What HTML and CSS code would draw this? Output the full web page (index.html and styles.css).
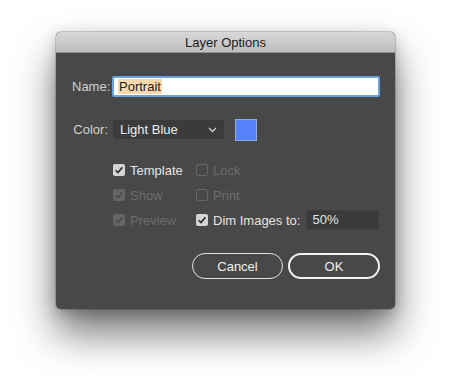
FILE: index.html
```html
<!DOCTYPE html>
<html>
<head>
<meta charset="utf-8">
<link rel="stylesheet" href="styles.css">
</head>
<body>
<div class="dialog">
  <div class="titlebar">Layer Options</div>
  <div class="content">
    <div class="row name-row">
      <span class="label">Name:</span>
      <div class="text-input focused"><span class="sel">Portrait</span></div>
    </div>
    <div class="row color-row">
      <span class="label">Color:</span>
      <div class="select"><span>Light Blue</span>
        <svg class="chev" width="9" height="6" viewBox="0 0 9 6"><path d="M1 1 L4.5 4.5 L8 1" fill="none" stroke="#cfcfcf" stroke-width="1.3"/></svg>
      </div>
      <div class="swatch"></div>
    </div>
    <div class="checks">
      <div class="check-row">
        <label class="cb col1"><span class="box on"><svg viewBox="0 0 12 12"><path d="M2.6 6.2 L5 8.6 L9.4 3.2" fill="none" stroke="#2a2a2a" stroke-width="1.6"/></svg></span>Template</label>
        <label class="cb dis"><span class="box off"></span>Lock</label>
      </div>
      <div class="check-row">
        <label class="cb col1 dis"><span class="box dison"><svg viewBox="0 0 12 12"><path d="M2.6 6.2 L5 8.6 L9.4 3.2" fill="none" stroke="#4a4a4a" stroke-width="1.6"/></svg></span>Show</label>
        <label class="cb dis"><span class="box off"></span>Print</label>
      </div>
      <div class="check-row">
        <label class="cb col1 dis"><span class="box dison"><svg viewBox="0 0 12 12"><path d="M2.6 6.2 L5 8.6 L9.4 3.2" fill="none" stroke="#4a4a4a" stroke-width="1.6"/></svg></span>Preview</label>
        <label class="cb"><span class="box on"><svg viewBox="0 0 12 12"><path d="M2.6 6.2 L5 8.6 L9.4 3.2" fill="none" stroke="#2a2a2a" stroke-width="1.6"/></svg></span>Dim Images to:</label>
        <div class="dim-input">50%</div>
      </div>
    </div>
    <div class="buttons">
      <button class="btn">Cancel</button>
      <button class="btn default">OK</button>
    </div>
  </div>
</div>
</body>
</html>
```
FILE: styles.css
```css
html, body {
  margin: 0;
  padding: 0;
  background: #ffffff;
  width: 451px;
  height: 389px;
  overflow: hidden;
  font-family: "Liberation Sans", Arial, sans-serif;
  font-size: 13px;
}
.dialog {
  margin: 32px 0 0 56px;
  width: 339px;
  height: 277px;
  background: #484848;
  border-radius: 5px;
  box-shadow: 0 24px 40px rgba(0,0,0,0.55), 0 4px 14px rgba(0,0,0,0.22), 0 0 0 1px rgba(0,0,0,0.15);
  overflow: hidden;
  display: flex;
  flex-direction: column;
}
.titlebar {
  height: 21px;
  line-height: 22px;
  text-align: center;
  color: #1c1c1c;
  background: linear-gradient(#d8d8d8, #bdbdbd);
  border-bottom: 1px solid #8e8e8e;
  box-sizing: border-box;
  flex: none;
}
.content {
  padding: 23px 15px 0 16px;
  display: flex;
  flex-direction: column;
}
.row {
  display: flex;
  align-items: center;
}
.label {
  width: 36px;
  text-align: right;
  color: #d2d2d2;
  margin-right: 4px;
}
.text-input {
  width: 268px;
  height: 21px;
  box-sizing: border-box;
  background: #ffffff;
  border: 2px solid #6aa2e0;
  border-radius: 2px;
  display: flex;
  align-items: center;
  padding-left: 4px;
  color: #222;
}
.sel {
  background: #f9dab0;
  padding: 0 1px;
  line-height: 15px;
}
.color-row {
  margin-top: 21px;
  height: 23px;
}
.color-row .label {
  margin-right: 5px;
}
.select {
  width: 111px;
  height: 19px;
  box-sizing: border-box;
  background: #3b3b3b;
  border-radius: 2px;
  color: #ececec;
  display: flex;
  align-items: center;
  justify-content: space-between;
  padding: 0 7px 0 7px;
}
.chev { display: block; }
.swatch {
  margin-left: 11px;
  width: 22px;
  height: 22px;
  box-sizing: border-box;
  background: #5581fb;
  border: 1px solid #93ace0;
}
.checks {
  margin-top: 19px;
  display: flex;
  flex-direction: column;
  gap: 5px;
  padding-left: 41px;
}
.check-row {
  display: flex;
  align-items: center;
  height: 20px;
}
.cb {
  display: flex;
  align-items: center;
  color: #e4e4e4;
}
.cb.col1 { width: 83px; }
.cb.dis { color: #6c6c6c; }
.box {
  width: 12px;
  height: 12px;
  box-sizing: border-box;
  border-radius: 2px;
  margin-right: 5px;
  display: block;
}
.box svg { width: 12px; height: 12px; display: block; }
.box.on { background: #d4d4d4; }
.box.dison { background: #646464; }
.box.off { border: 1px solid #676767; }
.dim-input {
  margin-left: 6px;
  width: 73px;
  height: 20px;
  box-sizing: border-box;
  background: #3a3a3a;
  border: 1px solid #3f3f3f;
  color: #e4e4e4;
  padding-left: 5px;
  line-height: 18px;
}
.buttons {
  margin-top: 23px;
  display: flex;
  justify-content: flex-end;
  gap: 5px;
}
.btn {
  font-family: inherit;
  font-size: 13px;
  color: #f0f0f0;
  background: transparent;
  width: 91px;
  height: 26px;
  border: 1.5px solid #e2e2e2;
  border-radius: 13px;
  padding: 0;
}
.btn.default {
  width: 92px;
  border: 2px solid #f2f2f2;
}
```
